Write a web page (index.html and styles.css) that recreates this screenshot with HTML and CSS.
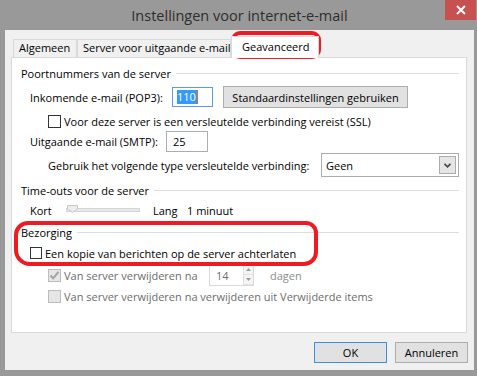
FILE: index.html
```html
<!DOCTYPE html>
<html lang="nl">
<head>
    <meta charset="UTF-8">
    <title>Instellingen voor internet-e-mail</title>
    <link rel="stylesheet" href="styles.css">
</head>
<body>
    <div class="window">
        <div class="titlebar">
            <span class="title">Instellingen voor internet-e-mail</span>
            <span class="close">
                <svg width="10" height="10" viewBox="0 0 10 10"><path d="M1 1L9 9M9 1L1 9" stroke="#fff" stroke-width="2"/></svg>
            </span>
        </div>

        <div class="dialog">
            <div class="tabs">
                <div class="tab tab-general">Algemeen</div>
                <div class="tab tab-outgoing">Server voor uitgaande e-mail</div>
                <div class="tab tab-active">Geavanceerd</div>
            </div>

            <div class="panel">
                <div class="group-head row-h1"><span>Poortnummers van de server</span><i class="rule"></i></div>

                <div class="row row-pop3">
                    <span class="lbl lbl-pop3">Inkomende e-mail (POP3):</span>
                    <span class="textbox textbox-focus"><span class="sel">110</span><span class="caret"></span></span>
                    <button class="btn btn-default-settings">Standaardinstellingen gebruiken</button>
                </div>

                <div class="row row-ssl indent2">
                    <span class="check"></span>
                    <span class="check-text">Voor deze server is een versleutelde verbinding vereist (SSL)</span>
                </div>

                <div class="row row-smtp">
                    <span class="lbl lbl-smtp">Uitgaande e-mail (SMTP):</span>
                    <span class="textbox textbox-smtp">25</span>
                </div>

                <div class="row row-enc indent2">
                    <span class="lbl lbl-enc">Gebruik het volgende type versleutelde verbinding:</span>
                    <span class="select">
                        <span class="select-value">Geen</span>
                        <span class="select-arrow">
                            <svg width="7" height="5" viewBox="0 0 7 5"><path d="M0.5 0.8L3.5 3.8L6.5 0.8" fill="none" stroke="#444" stroke-width="1.6"/></svg>
                        </span>
                    </span>
                </div>

                <div class="group-head row-h2"><span>Time-outs voor de server</span><i class="rule"></i></div>

                <div class="row row-slider">
                    <span class="lbl lbl-kort">Kort</span>
                    <span class="slider">
                        <span class="track"></span>
                        <svg class="thumb" width="11" height="8" viewBox="0 0 11 8"><path d="M0.5 0.5H10.5V4L5.5 7.5L0.5 4Z" fill="#ededed" stroke="#c8c8c8"/></svg>
                    </span>
                    <span class="lbl lbl-lang">Lang</span>
                    <span>1 minuut</span>
                </div>

                <div class="group-head row-h3"><span>Bezorging</span><i class="rule"></i></div>

                <div class="row row-copy indent1">
                    <span class="check"></span>
                    <span class="check-text">Een kopie van berichten op de server achterlaten</span>
                </div>

                <div class="row row-days indent2 disabled">
                    <span class="days-label">
                        <span class="check checked">
                            <svg width="11" height="11" viewBox="0 0 11 11"><path d="M1.5 5.5L4.2 8.3L9.5 1.8" fill="none" stroke="#a2a2a2" stroke-width="2"/></svg>
                        </span>
                        <span class="check-text">Van server verwijderen na</span>
                    </span>
                    <span class="textbox textbox-days">
                        <span class="days-value">14</span>
                        <span class="spin">
                            <span class="spin-btn"><svg width="5" height="3" viewBox="0 0 5 3"><path d="M0 3L2.5 0L5 3Z" fill="#9a9a9a"/></svg></span>
                            <span class="spin-btn"><svg width="5" height="3" viewBox="0 0 5 3"><path d="M0 0L2.5 3L5 0Z" fill="#9a9a9a"/></svg></span>
                        </span>
                    </span>
                    <span class="days-unit">dagen</span>
                </div>

                <div class="row row-items indent2 disabled">
                    <span class="check"></span>
                    <span class="check-text">Van server verwijderen na verwijderen uit Verwijderde items</span>
                </div>
            </div>

            <div class="footer">
                <button class="btn btn-ok">OK</button>
                <button class="btn btn-cancel">Annuleren</button>
            </div>
        </div>
    </div>

    <div class="mark mark-tab"></div>
    <div class="mark mark-delivery"></div>
</body>
</html>
```

FILE: styles.css
```css
* {
    box-sizing: border-box;
}
body {
    margin: 0;
    width: 477px;
    height: 376px;
    overflow: hidden;
    background: #999999;
    font-family: "Segoe UI", "Open Sans", "Noto Sans", sans-serif;
    font-size: 11px;
    color: #000;
}
.window {
    width: 477px;
    height: 376px;
    display: flex;
    flex-direction: column;
}
.titlebar {
    height: 30px;
    position: relative;
    display: flex;
    align-items: center;
    justify-content: center;
    font-size: 14.5px;
    color: #2e2e2e;
    padding-left: 2px;
}
.close {
    position: absolute;
    top: 0;
    right: 1px;
    width: 31px;
    height: 20px;
    background: #c75050;
    display: flex;
    align-items: center;
    justify-content: center;
}
.dialog {
    flex: 1;
    margin: 0 3px 6px 5px;
    background: #f0f0f0;
    padding: 6px 0 0 6px;
}

/* tabs */
.tabs {
    display: flex;
    align-items: flex-end;
    height: 21px;
    padding-left: 2px;
}
.tab {
    height: 18px;
    border: 1px solid #d9d9d9;
    border-bottom: none;
    background: #f0f0f0;
    padding-left: 5px;
    line-height: 16px;
    white-space: nowrap;
    overflow: hidden;
}
.tab-general { width: 64px; }
.tab-outgoing { width: 154px; }
.tab-active {
    position: relative;
    z-index: 1;
    width: 88px;
    height: 22px;
    margin-bottom: -1px;
    background: #fff;
    padding-left: 10px;
    line-height: 19px;
}

/* panel */
.panel {
    width: 456px;
    height: 276px;
    background: #fff;
    border: 1px solid #d9d9d9;
    padding: 4px 7px 0 9px;
}
.group-head {
    display: flex;
    align-items: center;
    white-space: nowrap;
}
.rule {
    flex: 1;
    height: 1px;
    margin-left: 5px;
    background: #dcdcdc;
}
.row {
    display: flex;
    align-items: center;
    white-space: nowrap;
}
.indent1 { padding-left: 9px; }
.indent2 { padding-left: 27px; }

.row-h1 { height: 22px; }
.row-pop3 { height: 26px; padding-left: 9px; }
.row-ssl { height: 22px; }
.row-smtp { height: 18px; padding-left: 9px; }
.row-enc { height: 30px; }
.row-h2 { height: 20px; }
.row-slider { height: 20px; padding-left: 9px; }
.row-h3 { height: 24px; }
.row-copy { height: 18px; }
.row-days { height: 26px; }
.row-items { height: 16px; }

.lbl-pop3 { width: 142px; }
.lbl-smtp { width: 136px; }
.lbl-enc { width: 273px; }
.lbl-kort { width: 34px; }
.lbl-lang { width: 34px; margin-left: 13px; }

/* inputs */
.textbox {
    display: flex;
    align-items: center;
    height: 20px;
    border: 1px solid #abadb3;
    background: #fff;
    padding-left: 4px;
}
.textbox-focus {
    width: 41px;
    border-color: #569de5;
}
.sel {
    background: #3399ff;
    color: #fff;
    line-height: 14px;
    padding: 0 1px 0 0;
}
.caret {
    width: 1px;
    height: 14px;
    background: #e07000;
}
.textbox-smtp {
    width: 42px;
    height: 21px;
    padding-left: 6px;
}
.textbox-days {
    width: 45px;
    height: 22px;
    border-color: #d9d9d9;
    padding: 0 0 0 6px;
    justify-content: space-between;
}
.days-value { color: #6d6d6d; }
.spin {
    display: flex;
    flex-direction: column;
    width: 10px;
    height: 20px;
    border-left: 1px solid #e0e0e0;
}
.spin-btn {
    flex: 1;
    display: flex;
    align-items: center;
    justify-content: center;
    background: #f4f4f4;
    border-bottom: 1px solid #e3e3e3;
}
.days-unit {
    margin-left: 16px;
    color: #8d8d8d;
}

.select {
    display: flex;
    align-items: center;
    width: 138px;
    height: 24px;
    border: 1px solid #acacac;
    background: #fff;
    padding: 0 2px 0 4px;
}
.select-value { flex: 1; }
.select-arrow {
    width: 17px;
    height: 18px;
    border: 1px solid #acacac;
    background: #e5e5e5;
    display: flex;
    align-items: center;
    justify-content: center;
}

/* checkboxes */
.check {
    width: 13px;
    height: 13px;
    border: 1px solid #333;
    background: #fff;
    display: flex;
    align-items: center;
    justify-content: center;
}
.check-text { margin-left: 3px; }
.row-copy .check { width: 12px; height: 12px; }
.disabled { color: #6d6d6d; }
.disabled .check {
    border-color: #bcbcbc;
    background: #e6e6e6;
}
.days-label {
    display: flex;
    align-items: center;
    width: 161px;
}

/* slider */
.slider {
    position: relative;
    width: 76px;
    height: 14px;
    display: flex;
    align-items: center;
}
.track {
    width: 74px;
    height: 4px;
    margin-left: 2px;
    background: #e7eaea;
    border: 1px solid #d6d6d6;
}
.thumb {
    position: absolute;
    left: 3px;
    top: 2px;
}

/* buttons */
.btn {
    font-family: inherit;
    font-size: inherit;
    color: #000;
    background: #e1e1e1;
    border: 1px solid #adadad;
    padding: 0;
    border-radius: 0;
}
.btn-default-settings {
    width: 185px;
    height: 22px;
    margin-left: 10px;
}
.footer {
    display: flex;
    justify-content: flex-end;
    gap: 8px;
    padding: 9px 6px 0 0;
}
.btn-ok, .btn-cancel {
    width: 73px;
    height: 21px;
}
.btn-ok { border-color: #3c8ee6; }

/* red annotations drawn over the screenshot */
.mark {
    position: absolute;
    border: 4px solid #ed1c24;
}
.mark-tab {
    left: 231px;
    top: 31px;
    width: 90px;
    height: 28px;
    border-radius: 9px;
}
.mark-delivery {
    left: 14px;
    top: 221px;
    width: 304px;
    height: 45px;
    border-radius: 14px 12px 14px 16px;
}
```
